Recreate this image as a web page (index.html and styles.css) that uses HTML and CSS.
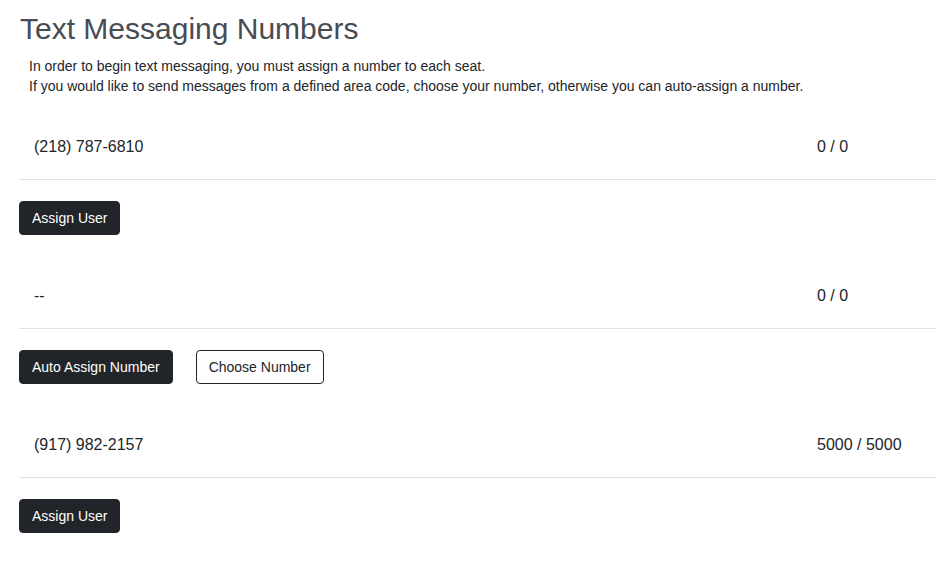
FILE: index.html
```html
<!DOCTYPE html>
<html>
<head>
<meta charset="utf-8">
<link rel="stylesheet" href="styles.css">
</head>
<body>
<div class="page">
  <h3 class="title">Text Messaging Numbers</h3>
  <div class="intro">
    <div>In order to begin text messaging, you must assign a number to each seat.</div>
    <div>If you would like to send messages from a defined area code, choose your number, otherwise you can auto-assign a number.</div>
  </div>

  <div class="section">
    <div class="row">
      <div class="number">(218) 787-6810</div>
      <div class="usage">0 / 0</div>
    </div>
    <div class="actions">
      <button class="btn btn-dark">Assign User</button>
    </div>
  </div>

  <div class="section">
    <div class="row">
      <div class="number">--</div>
      <div class="usage">0 / 0</div>
    </div>
    <div class="actions">
      <button class="btn btn-dark">Auto Assign Number</button>
      <button class="btn btn-outline">Choose Number</button>
    </div>
  </div>

  <div class="section">
    <div class="row">
      <div class="number">(917) 982-2157</div>
      <div class="usage">5000 / 5000</div>
    </div>
    <div class="actions">
      <button class="btn btn-dark">Assign User</button>
    </div>
  </div>
</div>
</body>
</html>
```

FILE: styles.css
```css
html, body {
  margin: 0;
  padding: 0;
  background: #ffffff;
}

body {
  font-family: "Liberation Sans", Arial, sans-serif;
  color: #212529;
}

.page {
  padding: 11px 0 0 19px;
}

.title {
  margin: 0 0 0 1px;
  font-size: 30px;
  font-weight: 400;
  line-height: 36px;
  color: #474c52;
}

.intro {
  margin: 9px 0 17px 10px;
  font-size: 14px;
  line-height: 20px;
  color: #212529;
}

.section {
  margin-bottom: 27px;
}

.row {
  display: grid;
  grid-template-columns: 1fr 104px;
  padding: 23px 15px 21px;
  border-bottom: 1px solid #dee2e6;
  font-size: 16px;
  line-height: 22px;
}

.actions {
  display: flex;
  gap: 23px;
  margin-top: 21px;
}

.btn {
  font-family: "Liberation Sans", Arial, sans-serif;
  font-size: 14px;
  line-height: 20px;
  padding: 6px 12px;
  border-radius: 4px;
  border: 1px solid #212529;
  cursor: pointer;
}

.btn-dark {
  background: #212529;
  color: #ffffff;
}

.btn-outline {
  background: #ffffff;
  color: #212529;
}
```
